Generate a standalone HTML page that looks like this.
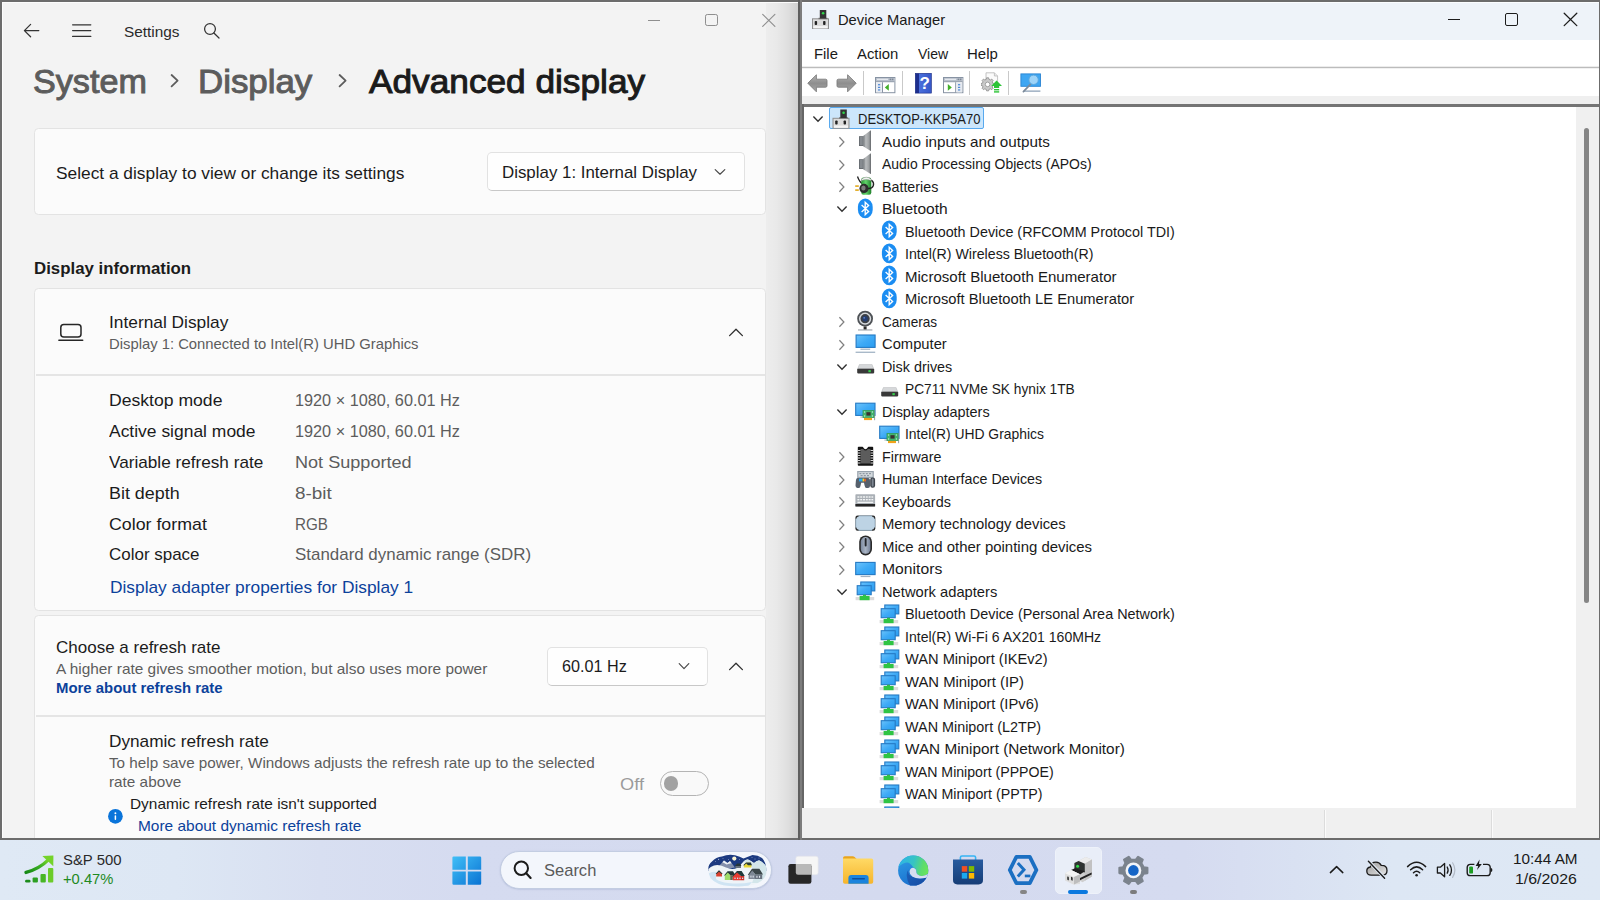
<!DOCTYPE html>
<html lang="en"><head><meta charset="utf-8"><title>Advanced display - Device Manager</title>
<style>

html,body{margin:0;padding:0}
body{width:1600px;height:900px;overflow:hidden;position:relative;background:#dbe4f2;font-family:'Liberation Sans',sans-serif}
div,span,svg{position:absolute;box-sizing:border-box}
.t{white-space:pre;transform-origin:0 0;display:block}
#taskbar{left:0;top:840px;width:1600px;height:60px;background:linear-gradient(90deg,#dfe9f5 0%,#dde7f4 11%,#d8dff1 20%,#d5dbf0 29%,#d4daef 55%,#d5dbf0 74%,#d9e1f2 81%,#dde7f4 87%,#dee8f4 100%)}
#set{left:0;top:0;width:800px;height:840px;background:#f3f3f3;overflow:hidden}
#dm{left:800px;top:0;width:800px;height:840px;background:#fff;overflow:hidden}
.card{background:#fbfbfb;border:1.4px solid #e3e3e3;border-radius:4.5px}
.hr{height:1.5px;background:#e5e5e5}
.combo{background:#fefefe;border:1.2px solid #e2e2e2;border-bottom:1.4px solid #c8c8c8;border-radius:5px}
.bd{background:#6c6c6c}

</style></head>
<body>
<div id="taskbar"></div>
<svg style="left:23px;top:852px" width="33" height="33" viewBox="0 0 33 33"><defs><linearGradient id="gSP" x1="0" y1="1" x2="1" y2="0"><stop offset="0" stop-color="#168a16"/><stop offset="0.55" stop-color="#3aae22"/><stop offset="1" stop-color="#7bd82a"/></linearGradient></defs><rect x="2.1" y="27.8" width="5.4" height="2.8" rx="1.3" fill="#1c8c1c"/><rect x="9.6" y="25.6" width="5.3" height="5" rx="1" fill="#2c9f22"/><rect x="17.5" y="21.9" width="5.3" height="8.7" rx="1" fill="#48b625"/><rect x="25" y="15.9" width="5.3" height="14.7" rx="1" fill="#6ccc2a"/><path d="M3 20.4 Q16 17 25.6 7.6" fill="none" stroke="url(#gSP)" stroke-width="3.4" stroke-linecap="round"/><path d="M19.4 4 L30.4 3.4 L30.3 14.2 Z" fill="#74d32a"/></svg>
<svg style="left:452px;top:856px" width="30" height="30" viewBox="0 0 30 30"><defs><linearGradient id="gW" x1="0" y1="0" x2="1" y2="1"><stop offset="0" stop-color="#41bff7"/><stop offset="1" stop-color="#0a73d3"/></linearGradient></defs><path d="M1.6 0.4 H13.8 V13.8 H0.4 V1.6 Q0.4 0.4 1.6 0.4 Z M15.8 0.4 H28 Q29.2 0.4 29.2 1.6 V13.8 H15.8 Z M0.4 15.5 H13.8 V28.8 H1.6 Q0.4 28.8 0.4 27.6 Z M15.8 15.5 H29.2 V27.6 Q29.2 28.8 28 28.8 H15.8 Z" fill="url(#gW)"/></svg>
<div style="left:500px;top:851px;width:272px;height:38px;border-radius:19px;background:#f3f6fc;border:1px solid #c3cde2;box-shadow:0 0.5px 1.5px rgba(80,100,150,0.25)"></div>
<svg style="left:511px;top:858px" width="24" height="24" viewBox="0 0 24 24"><circle cx="10.3" cy="10.2" r="6.7" fill="none" stroke="#1b1b1b" stroke-width="2"/><path d="M15.2 15.3 L19.6 19.9" stroke="#1b1b1b" stroke-width="2.2" stroke-linecap="round"/></svg>
<svg style="left:706px;top:853px" width="64" height="36" viewBox="0 0 64 36"><defs><clipPath id="cpV"><path d="M2.4 16 Q2 12 6 8.5 Q10 4 16 3.4 Q22 1 29 2.2 Q34 3.4 37.5 5.4 Q42 3.6 46.5 2 Q52 2.2 56 5 Q60 9 60.4 17 Q61 26 50 31 Q38 34.6 24 33 Q10 32 4.6 25 Q2.4 21 2.4 16 Z"/></clipPath></defs><g clip-path="url(#cpV)"><rect x="0" y="0" width="64" height="36" fill="#eaf2f7"/><rect x="0" y="0" width="64" height="18" fill="#1c3a80"/><path d="M13 13 L18 7.4 L21.4 10 L24 8 L29 14.6 L20 16 Z" fill="#8490ac"/><path d="M16.4 9.2 L18 7.4 L21.4 10 L24 8 L25.6 10.2 L23 10.8 L20.6 11.6 L18 10 Z" fill="#eef2f7"/><path d="M0 20 Q3 13.4 8 12.4 Q14 11 20 14.6 Q26 17 31 15 Q35 11.6 38 8 Q40 6 42 6.6 Q45 8 48 10 Q51 7 53.4 7.6 Q57 9 64 17 V36 H0 Z" fill="#eef4f8"/><path d="M37 9.4 Q40 6 42 6.6 Q45.6 8.2 48 10.2 Q51 7 53.4 7.6 Q58 9.4 62 16 V30 H46 Q50 22 46 14 Q42 9 37 9.4 Z" fill="#d3e6ea"/><path d="M0 22 Q6 17.6 10 19 V26 Q14 29 22 30 Q34 31.6 46 29 L40 36 H0 Z" fill="#cfe4f3"/><circle cx="28.3" cy="5.6" r="2.1" fill="#f8f4d2"/><path d="M10.2 20.4 L13 17.6 L16 20.4 V23.6 H10.2 Z" fill="#d9402f"/><path d="M9.6 20.8 L13 17.2 L16.6 20.8 L15.6 21 L13 18.8 L10.6 21 Z" fill="#233b3b"/><path d="M18.8 22 L21.6 18.8 L24.2 22 V27 H18.8 Z" fill="#9fdc6a"/><path d="M18 22.4 L21.6 18.2 L27 18.2 L29.6 22.4 L24.6 22.4 L21.8 19.6 L19 22.6 Z" fill="#22383a"/><rect x="24.2" y="22.2" width="2.6" height="4.8" fill="#5d6b50"/><path d="M26.8 23 L31 18.6 L35 23 V27.2 H26.8 Z" fill="#e83b30"/><path d="M35 23 H38.2 V27.2 H35 Z" fill="#c9302a"/><path d="M26 23.4 L31 18 L35.6 18 L38.8 23 L35 23 L31 19.6 L27 23.6 Z" fill="#1f3a3b"/><g fill="#cfe0ee"><rect x="28.4" y="24.6" width="1.2" height="1.4"/><rect x="31" y="24.6" width="1.2" height="1.4"/><rect x="33.4" y="24.6" width="1.2" height="1.4"/><rect x="36" y="24.6" width="1.2" height="1.4"/></g><path d="M42.6 21.4 L46 16.4 L49 21.4 V26 H42.6 Z" fill="#7c8794"/><path d="M49 21.4 H56.2 V26 H49 Z" fill="#6a7480"/><path d="M41.8 21.8 L46 15.8 L53.4 15.8 L57 21.6 L49.4 21.6 L46.2 17.4 L42.8 22 Z" fill="#3a4649"/><g fill="#dfe7ee"><rect x="44.4" y="22.6" width="1.1" height="2"/><rect x="46.6" y="22.6" width="1.1" height="2"/><rect x="50.4" y="22.8" width="1.1" height="2"/><rect x="53" y="22.8" width="1.1" height="2"/></g><path d="M37.8 12 L40 9.8 L44.6 9.8 L45.4 12 V14.6 H37.8 Z" fill="#e6d737"/><path d="M37.2 12.2 L40 9.4 L44.8 9.4 L46 12.2 L42 12.2 L40.2 10.6 L38.2 12.4 Z" fill="#26393b"/><path d="M29.4 12.8 L31.4 11 L34 11 L35 12.8 V15 H29.4 Z" fill="#66707c"/><path d="M28.8 13 L31.2 10.6 L34.2 10.6 L35.4 13 Z" fill="#26363a"/><g fill="#e6ecf6"><circle cx="12.6" cy="6.2" r="0.55"/><circle cx="17" cy="5.4" r="0.4"/><circle cx="22.6" cy="6.4" r="0.4"/><circle cx="33.6" cy="6.4" r="0.4"/><circle cx="46" cy="4.6" r="0.45"/><circle cx="49" cy="6" r="0.45"/><circle cx="53" cy="5" r="0.4"/><circle cx="9.6" cy="8.6" r="0.4"/></g></g></svg>
<svg style="left:787px;top:855px" width="33" height="30" viewBox="0 0 33 30"><rect x="8.8" y="1.2" width="22.4" height="18.6" rx="2.2" fill="#f6f6f6" stroke="#e2e4ea" stroke-width="0.6"/><rect x="1.4" y="9" width="23" height="19.8" rx="2.2" fill="#272727"/><path d="M8.8 9 H24.4 V19.8 H11 Q8.8 19.8 8.8 17.6 Z" fill="#b9b9b9"/></svg>
<svg style="left:842px;top:855px" width="32" height="30" viewBox="0 0 32 30"><defs><linearGradient id="gF" x1="0" y1="0" x2="0" y2="1"><stop offset="0" stop-color="#ffd965"/><stop offset="1" stop-color="#f6b52c"/></linearGradient></defs><path d="M1 3 Q1 1.2 2.8 1.2 H10.6 Q11.8 1.2 12.6 2 L14.6 4 H1 Z" fill="#e9a41c"/><path d="M1 3.6 H29.4 Q31.2 3.6 31.2 5.4 V27 Q31.2 28.8 29.4 28.8 H2.8 Q1 28.8 1 27 Z" fill="url(#gF)"/><path d="M6.4 28.8 V23 Q6.4 20 9.4 20 H23.6 Q26.6 20 26.6 23 V28.8 Z" fill="#1b84dd"/><rect x="10" y="23" width="13" height="1.4" rx="0.7" fill="#0d4f9e"/></svg>
<svg style="left:897px;top:853.5px" width="33" height="33" viewBox="0 0 33 33"><defs><linearGradient id="gE1" x1="0" y1="0.3" x2="1" y2="0.5"><stop offset="0" stop-color="#2db2ec"/><stop offset="0.5" stop-color="#36c3c4"/><stop offset="0.8" stop-color="#5cdc6c"/><stop offset="1" stop-color="#6be458"/></linearGradient><linearGradient id="gE2" x1="0.2" y1="0" x2="0.6" y2="1"><stop offset="0" stop-color="#2f9ee6"/><stop offset="1" stop-color="#186bcb"/></linearGradient><linearGradient id="gE3" x1="0" y1="0" x2="1" y2="1"><stop offset="0" stop-color="#1d62bd"/><stop offset="1" stop-color="#15479d"/></linearGradient><clipPath id="cpE"><circle cx="16.2" cy="16.5" r="15.1"/></clipPath></defs><g clip-path="url(#cpE)"><rect x="0" y="0" width="33" height="33" fill="url(#gE2)"/><path d="M0 14.2 L0 0 H33 V20 L31 19.4 Q27.5 22.8 23 21.7 Q19.6 20.7 19.3 18 Q19.5 14.4 16.4 13.6 Q13.4 9 10.7 8.5 Q5.6 8.4 0 14.2 Z" fill="url(#gE1)"/><path d="M11.4 15.4 Q10.4 21 15.1 22.6 Q20.4 25.8 29.2 23.7 L33 24 V33 H14 Q9.8 27 9.7 21.4 Q9.6 17.6 11.4 15.4 Z" fill="url(#gE3)"/><path d="M16 13.8 Q19.5 14.2 19.3 18 Q19.6 20.7 23 21.7 Q27.2 22.7 31.4 19.8 L33 20 V23 L29.2 23.8 Q20.4 25.9 15.2 22.5 Q12.4 20.6 12.6 17.3 Q13.2 14 16 13.8 Z" fill="#d6ddf0"/></g></svg>
<svg style="left:952px;top:854px" width="32" height="32" viewBox="0 0 32 32"><defs><linearGradient id="gS" x1="0" y1="0" x2="0" y2="1"><stop offset="0" stop-color="#275b9f"/><stop offset="1" stop-color="#163d76"/></linearGradient></defs><path d="M8.4 6.2 V3.6 Q8.4 2 10 2 H22 Q23.6 2 23.6 3.6 V6.2" fill="none" stroke="#36b4f4" stroke-width="1.6"/><path d="M1 5.4 H31 V26 Q31 30.4 26.6 30.4 H5.4 Q1 30.4 1 26 Z" fill="url(#gS)"/><rect x="9.8" y="12.1" width="5.4" height="5.6" fill="#f25022"/><rect x="16.8" y="12.1" width="5.4" height="5.6" fill="#7fba00"/><rect x="9.8" y="19" width="5.4" height="5.6" fill="#1ba9f0"/><rect x="16.8" y="19" width="5.4" height="5.6" fill="#ffb900"/></svg>
<svg style="left:1006px;top:853px" width="34" height="34" viewBox="0 0 34 34"><path d="M10.4 3.8 H23.8 L30.4 17 L23.8 30.2 H10.4 L3.8 17 Z" fill="none" stroke="#1b6fc2" stroke-width="3.8" stroke-linejoin="round"/><path d="M11.8 10 L18 16.8 L11.8 23.6" fill="none" stroke="#1b6fc2" stroke-width="3"/><rect x="18.8" y="21.6" width="5.6" height="2.7" fill="#1b6fc2"/></svg>
<div style="left:1020.4px;top:890.2px;width:7px;height:3.4px;border-radius:2px;background:#858585"></div>
<div style="left:1055px;top:846.6px;width:47px;height:47.6px;border-radius:5px;background:#e9eef8;border:1px solid #eef2fa"></div>
<svg style="left:1063px;top:855px" width="32" height="31" viewBox="0 0 32 31"><path d="M15.5 6 L22.6 2 L29 4.6 L29 21.4 L19.6 27.2 L15.5 25 Z" fill="#cfcfcf"/><path d="M15.5 6 L22.6 2 L29 4.6 L21.8 8.8 Z" fill="#ececec"/><path d="M21.8 8.8 L29 4.6 V21.4 L21.8 25.8 Z" fill="#c2c2c2"/><path d="M11.4 8 L15.5 6 L21.8 8.8 V17.4 L11.4 14.8 Z" fill="#2f3331"/><circle cx="14.6" cy="11.2" r="1.5" fill="#2fe04a"/><path d="M8 15 L12 13.2 L21.8 16.2 L17 19.4 Z" fill="#1f1f1f"/><path d="M2 18.2 L8 15 L17 19.2 V29 L10.4 29.6 L2 25.6 Z" fill="#dedede"/><path d="M2 18.2 L8 15 L17 19.2 L11 22 Z" fill="#f4f4f4"/><path d="M11 22 L17 19.2 V26.6 L11 29.6 Z" fill="#bdbdbd"/><path d="M17 23 L28.6 17.6 V19.4 L17 25.2 Z" fill="#222"/><rect x="4.2" y="21.4" width="1.7" height="3.6" rx="0.8" fill="#333" transform="skewY(25) translate(0,-2.2)"/><rect x="8" y="21.6" width="1.7" height="3.6" rx="0.8" fill="#333" transform="skewY(25) translate(0,-3.8)"/></svg>
<div style="left:1068.4px;top:890.2px;width:19.8px;height:4px;border-radius:2px;background:#0b79df"></div>
<svg style="left:1117px;top:853.6px" width="33" height="33" viewBox="0 0 33 33"><path d="M26.62 13.24 L30.34 13.72 L30.34 19.08 L26.62 19.56 L24.25 23.67 L25.69 27.14 L21.05 29.82 L18.77 26.83 L14.03 26.83 L11.75 29.82 L7.11 27.14 L8.55 23.67 L6.18 19.56 L2.46 19.08 L2.46 13.72 L6.18 13.24 L8.55 9.13 L7.11 5.66 L11.75 2.98 L14.03 5.97 L18.77 5.97 L21.05 2.98 L25.69 5.66 L24.25 9.13 Z" fill="#7b838d" stroke="#7b838d" stroke-width="2.2" stroke-linejoin="round"/><circle cx="16.4" cy="16.4" r="7.9" fill="#f2f4f8"/><circle cx="16.4" cy="16.4" r="5.3" fill="#1565c6"/></svg>
<div style="left:1130.4px;top:890.4px;width:6.6px;height:3.2px;border-radius:2px;background:#7c7c7c"></div>
<svg style="left:1328px;top:863px" width="18" height="13" viewBox="0 0 18 13"><path d="M2.4 9.6 L8.6 3.6 L14.8 9.6" fill="none" stroke="#1b1b1b" stroke-width="1.5" stroke-linecap="round" stroke-linejoin="round"/></svg>
<svg style="left:1364px;top:858px" width="26" height="22" viewBox="0 0 26 22"><defs><linearGradient id="gC" x1="0" y1="0" x2="1" y2="1"><stop offset="0" stop-color="#9b9b9b"/><stop offset="1" stop-color="#e6e6e6"/></linearGradient></defs><path d="M7.2 17.2 Q2.8 17.2 2.8 13 Q2.8 9.6 6.4 9 Q7 4.2 12 4.2 Q15.6 4.2 17.2 7.4 Q23 7.2 23 12.6 Q23 17.2 18.4 17.2 Z" fill="url(#gC)" stroke="#1b1b1b" stroke-width="1.3" stroke-linejoin="round"/><path d="M4.6 3.2 L20.6 20" stroke="#dfe8f3" stroke-width="3.4"/><path d="M4.4 3.2 L20.6 20.2" stroke="#1b1b1b" stroke-width="1.4" stroke-linecap="round"/></svg>
<svg style="left:1405px;top:859px" width="24" height="20" viewBox="0 0 24 20"><path d="M2.6 7.6 Q11.6 -1.2 20.6 7.6" fill="none" stroke="#1b1b1b" stroke-width="1.5" stroke-linecap="round"/><path d="M5.6 10.8 Q11.6 5 17.6 10.8" fill="none" stroke="#1b1b1b" stroke-width="1.5" stroke-linecap="round"/><path d="M8.5 13.8 Q11.6 10.8 14.7 13.8" fill="none" stroke="#1b1b1b" stroke-width="1.5" stroke-linecap="round"/><circle cx="11.6" cy="16.2" r="1.3" fill="#1b1b1b"/></svg>
<svg style="left:1435px;top:860px" width="24" height="20" viewBox="0 0 24 20"><path d="M2.4 7.2 H5.4 L9.6 3.4 V16.8 L5.4 13 H2.4 Z" fill="none" stroke="#1b1b1b" stroke-width="1.3" stroke-linejoin="round"/><path d="M12.2 7 Q14 10.1 12.2 13.2" fill="none" stroke="#1b1b1b" stroke-width="1.3" stroke-linecap="round"/><path d="M14.8 4.8 Q18.2 10.1 14.8 15.4" fill="none" stroke="#1b1b1b" stroke-width="1.3" stroke-linecap="round"/><path d="M17.6 2.8 Q22.2 10.1 17.6 17.4" fill="none" stroke="#b4bcc8" stroke-width="1.2" stroke-linecap="round"/></svg>
<svg style="left:1465px;top:858px" width="29" height="20" viewBox="0 0 29 20"><rect x="2.2" y="6.4" width="23" height="11.2" rx="3.2" fill="none" stroke="#1b1b1b" stroke-width="1.4"/><path d="M25.8 10 Q27.4 10 27.4 12 Q27.4 14 25.8 14 Z" fill="#1b1b1b"/><rect x="4.2" y="8.4" width="3.8" height="7.2" rx="1.2" fill="#1d9d22"/><rect x="9.4" y="4" width="8.6" height="4" fill="#dbe6f2"/><path d="M14.6 1.6 L10.6 8 H13.2 L12 12 L16.8 6 H14 Z" fill="#1b1b1b"/></svg>
<div id="set"><div style="left:766px;top:3px;width:32px;height:835px;background:linear-gradient(90deg,rgba(0,0,0,0.025) 0%,rgba(0,0,0,0.045) 35%,rgba(0,0,0,0.085) 70%,rgba(0,0,0,0.145) 100%)"></div>
<div class="card" style="left:34.3px;top:128.3px;width:731.4px;height:86.7px"></div>
<div class="combo" style="left:487.3px;top:152.3px;width:257.3px;height:38.8px"></div>
<div class="card" style="left:34.3px;top:288.3px;width:731.4px;height:323.2px"></div>
<div class="hr" style="left:35.5px;top:374.2px;width:729px"></div>
<div class="card" style="left:34.3px;top:615.3px;width:731.4px;height:260px"></div>
<div class="hr" style="left:35.5px;top:715px;width:729px"></div>
<div class="combo" style="left:547.2px;top:646.5px;width:161.3px;height:39px"></div>
<div style="left:659.5px;top:771.3px;width:49.3px;height:24.4px;border:1.2px solid #b4b4b4;border-radius:13px;background:#f9f9f9"></div>
<div style="left:663.8px;top:776.3px;width:14.4px;height:14.4px;border-radius:8px;background:#a2a2a2"></div>
<svg style="left:22px;top:22px" width="20" height="18" viewBox="0 0 20 18"><path d="M16.8 8.6 H2.6 M8.6 2.4 L2.4 8.6 L8.6 14.8" fill="none" stroke="#333" stroke-width="1.25" stroke-linecap="round" stroke-linejoin="round"/></svg>
<svg style="left:70px;top:22px" width="24" height="18" viewBox="0 0 24 18"><path d="M2.6 2.8 H20.8 M2.6 8.6 H20.8 M2.6 14.4 H20.8" stroke="#333" stroke-width="1.25" stroke-linecap="round"/></svg>
<svg style="left:202px;top:20px" width="22" height="22" viewBox="0 0 22 22"><circle cx="8" cy="9" r="5.4" fill="none" stroke="#333" stroke-width="1.25"/><path d="M11.9 13 L17 18" stroke="#333" stroke-width="1.25" stroke-linecap="round"/></svg>
<svg style="left:170.2px;top:72px" width="12" height="18" viewBox="0 0 12 18"><path d="M1.6 3 L7.6 8.7 L1.6 14.4" fill="none" stroke="#5c5c5c" stroke-width="1.8" stroke-linecap="round" stroke-linejoin="round"/></svg>
<svg style="left:337.8px;top:72px" width="12" height="18" viewBox="0 0 12 18"><path d="M1.6 3 L7.6 8.7 L1.6 14.4" fill="none" stroke="#5c5c5c" stroke-width="1.8" stroke-linecap="round" stroke-linejoin="round"/></svg>
<div style="left:647.5px;top:19.7px;width:12.5px;height:1.1px;background:#8e8e8e"></div>
<div style="left:705px;top:14.2px;width:12.5px;height:12.3px;border:1.1px solid #8e8e8e;border-radius:2.3px"></div>
<svg style="left:761px;top:13px" width="16" height="16" viewBox="0 0 16 16"><path d="M1.7 1.4 L13.9 13.4 M13.9 1.4 L1.7 13.4" stroke="#8e8e8e" stroke-width="1.1" stroke-linecap="round"/></svg>
<svg style="left:713px;top:167px" width="14" height="10" viewBox="0 0 14 10"><path d="M2.2 2.6 L7 7.2 L11.8 2.6" fill="none" stroke="#4a4a4a" stroke-width="1.2" stroke-linecap="round" stroke-linejoin="round"/></svg>
<svg style="left:677px;top:661px" width="14" height="10" viewBox="0 0 14 10"><path d="M2.2 2.6 L7 7.6 L11.8 2.6" fill="none" stroke="#4a4a4a" stroke-width="1.2" stroke-linecap="round" stroke-linejoin="round"/></svg>
<svg style="left:727.5px;top:325.5px" width="16" height="12" viewBox="0 0 16 12"><path d="M1.6 9.6 L8 3.2 L14.4 9.6" fill="none" stroke="#2e2e2e" stroke-width="1.3" stroke-linecap="round" stroke-linejoin="round"/></svg>
<svg style="left:727.5px;top:659.5px" width="16" height="12" viewBox="0 0 16 12"><path d="M1.6 9.6 L8 3.2 L14.4 9.6" fill="none" stroke="#2e2e2e" stroke-width="1.3" stroke-linecap="round" stroke-linejoin="round"/></svg>
<svg style="left:57px;top:322px" width="28" height="21" viewBox="0 0 28 21"><rect x="3.8" y="2.5" width="20.2" height="12.6" rx="3" fill="none" stroke="#262626" stroke-width="1.5"/><path d="M1.9 18.3 H25.7" stroke="#262626" stroke-width="1.5" stroke-linecap="round"/></svg>
<svg style="left:107px;top:808px" width="17" height="17" viewBox="0 0 17 17"><circle cx="8.4" cy="8.3" r="7.35" fill="#0a74da"/><circle cx="8.4" cy="5.2" r="0.95" fill="#fff"/><rect x="7.65" y="7.3" width="1.5" height="4.6" rx="0.7" fill="#fff"/></svg>
<div style="left:2px;top:2px;width:796px;height:1px;background:#fcfcfc"></div>
<div style="left:2px;top:2px;width:1px;height:836px;background:#fcfcfc"></div>
<div class="bd" style="left:0;top:0;width:800px;height:1.6px"></div>
<div class="bd" style="left:0;top:0;width:1.7px;height:840px"></div>
<div class="bd" style="left:0;top:838.3px;width:800px;height:1.7px"></div></div>
<div id="dm"><div style="left:0;top:0;width:800px;height:39.5px;background:#eef3f9"></div>
<div style="left:0;top:2px;width:800px;height:1px;background:#fbfdff"></div>
<div style="left:0;top:67px;width:800px;height:1px;background:#bcbcbc"></div>
<div style="left:0;top:66px;width:800px;height:1px;background:#ececec"></div>
<div style="left:0;top:68px;width:800px;height:1px;background:#f1f1f1"></div>
<div style="left:0;top:96.2px;width:800px;height:8.3px;background:#efefef"></div>
<div style="left:0;top:104.3px;width:800px;height:2.3px;background:#747474"></div>
<div style="left:0;top:104.3px;width:3.9px;height:704px;background:#666"></div>
<div style="left:776px;top:106.6px;width:23px;height:701px;background:#f0f0f0"></div>
<div style="left:783.7px;top:128px;width:5.4px;height:475px;border-radius:3px;background:#858585"></div>
<div style="left:0;top:807.6px;width:800px;height:31px;background:#f0f0f0"></div>
<div style="left:523.5px;top:810px;width:1px;height:28px;background:#e0e0e0"></div><div style="left:524.5px;top:810px;width:1px;height:28px;background:#fafafa"></div>
<div style="left:690.5px;top:810px;width:1px;height:28px;background:#e0e0e0"></div><div style="left:691.5px;top:810px;width:1px;height:28px;background:#fafafa"></div>
<div style="left:29.2px;top:106.8px;width:154.6px;height:22.2px;background:#cce6fb;border:1px solid #58a9ee;border-radius:2px"></div>
<svg style="left:11.799999999999955px;top:115.2px" width="12" height="8" viewBox="0 0 12 8"><path d="M1.4 1.6 L6 6.2 L10.6 1.6" fill="none" stroke="#303030" stroke-width="1.4"/></svg>
<svg style="left:32.0px;top:107.5px" width="21" height="21" viewBox="0 0 21 21"><rect x="1" y="10.3" width="16" height="10" fill="#dcdcdc" stroke="#8f8f8f" stroke-width="1"/><rect x="2" y="17.6" width="14" height="2.2" fill="#f4f4f4"/><rect x="7" y="9.3" width="9" height="1.4" fill="#777"/><rect x="8.3" y="1.5" width="6.5" height="8.5" fill="#333"/><circle cx="11.6" cy="4.8" r="1.3" fill="#2fd84a"/><rect x="3.2" y="12.4" width="2.4" height="4.2" rx="0.8" fill="#222"/><rect x="11.6" y="12.4" width="2.4" height="4.2" rx="0.8" fill="#222"/></svg>
<svg style="left:38px;top:136.0px" width="8" height="12" viewBox="0 0 8 12"><path d="M1.4 1.3 L5.9 6 L1.4 10.7" fill="none" stroke="#808080" stroke-width="1.25"/></svg>
<svg style="left:55px;top:130.0px" width="21" height="21" viewBox="0 0 21 21"><rect x="4" y="6.2" width="4.4" height="9.8" fill="#63686d"/><rect x="4.8" y="7" width="3" height="8.2" fill="#868b90"/><path d="M8.2 6 L15.4 0.6 L15.6 21 L8.2 16.2 Z" fill="url(#gSpk)"/><path d="M15 0.8 L15.8 0.6 L15.8 21 L15 20.6 Z" fill="#5d6165"/></svg>
<svg style="left:38px;top:158.5px" width="8" height="12" viewBox="0 0 8 12"><path d="M1.4 1.3 L5.9 6 L1.4 10.7" fill="none" stroke="#808080" stroke-width="1.25"/></svg>
<svg style="left:55px;top:152.5px" width="21" height="21" viewBox="0 0 21 21"><rect x="4" y="6.2" width="4.4" height="9.8" fill="#63686d"/><rect x="4.8" y="7" width="3" height="8.2" fill="#868b90"/><path d="M8.2 6 L15.4 0.6 L15.6 21 L8.2 16.2 Z" fill="url(#gSpk)"/><path d="M15 0.8 L15.8 0.6 L15.8 21 L15 20.6 Z" fill="#5d6165"/></svg>
<svg style="left:38px;top:181.0px" width="8" height="12" viewBox="0 0 8 12"><path d="M1.4 1.3 L5.9 6 L1.4 10.7" fill="none" stroke="#808080" stroke-width="1.25"/></svg>
<svg style="left:55px;top:175.0px" width="21" height="21" viewBox="0 0 21 21"><path d="M2.5 1.5 C4 6,6 8,8 9" fill="none" stroke="#222" stroke-width="1.3"/><rect x="6.3" y="2.5" width="10" height="17.3" rx="2.2" fill="url(#gGrn)"/><path d="M6.5 4.2 Q11.3 0.2 16.1 4.2 L16.1 5.6 Q11.3 3.4 6.5 5.6 Z" fill="#f1f1f1" stroke="#8a8a8a" stroke-width="0.5"/><path d="M13 13.5 C19 14,20 8,16.5 5.2" fill="none" stroke="#222" stroke-width="1.4"/><circle cx="9" cy="13.4" r="4.6" fill="#2d2d2d"/><ellipse cx="8.4" cy="13" rx="2.2" ry="2.6" fill="#7b7b7b"/><rect x="0.2" y="10.3" width="3.6" height="1.6" fill="#e2a91c"/><rect x="0.2" y="14.3" width="3.6" height="1.6" fill="#e2a91c"/></svg>
<svg style="left:35.5px;top:205.2px" width="12" height="8" viewBox="0 0 12 8"><path d="M1.4 1.6 L6 6.2 L10.6 1.6" fill="none" stroke="#303030" stroke-width="1.4"/></svg>
<svg style="left:55px;top:197.5px" width="21" height="21" viewBox="0 0 21 21"><rect x="2.9" y="0.5" width="14.8" height="19.8" rx="7.4" ry="8.6" fill="#1b8df2"/><path d="M6.6 6.9 L13.6 13.4 L10.2 16.6 L10.2 4.2 L13.6 7.4 L6.6 13.9" fill="none" stroke="#fff" stroke-width="1.35" stroke-linejoin="miter"/></svg>
<svg style="left:79px;top:220.0px" width="21" height="21" viewBox="0 0 21 21"><rect x="2.9" y="0.5" width="14.8" height="19.8" rx="7.4" ry="8.6" fill="#1b8df2"/><path d="M6.6 6.9 L13.6 13.4 L10.2 16.6 L10.2 4.2 L13.6 7.4 L6.6 13.9" fill="none" stroke="#fff" stroke-width="1.35" stroke-linejoin="miter"/></svg>
<svg style="left:79px;top:242.5px" width="21" height="21" viewBox="0 0 21 21"><rect x="2.9" y="0.5" width="14.8" height="19.8" rx="7.4" ry="8.6" fill="#1b8df2"/><path d="M6.6 6.9 L13.6 13.4 L10.2 16.6 L10.2 4.2 L13.6 7.4 L6.6 13.9" fill="none" stroke="#fff" stroke-width="1.35" stroke-linejoin="miter"/></svg>
<svg style="left:79px;top:265.0px" width="21" height="21" viewBox="0 0 21 21"><rect x="2.9" y="0.5" width="14.8" height="19.8" rx="7.4" ry="8.6" fill="#1b8df2"/><path d="M6.6 6.9 L13.6 13.4 L10.2 16.6 L10.2 4.2 L13.6 7.4 L6.6 13.9" fill="none" stroke="#fff" stroke-width="1.35" stroke-linejoin="miter"/></svg>
<svg style="left:79px;top:287.5px" width="21" height="21" viewBox="0 0 21 21"><rect x="2.9" y="0.5" width="14.8" height="19.8" rx="7.4" ry="8.6" fill="#1b8df2"/><path d="M6.6 6.9 L13.6 13.4 L10.2 16.6 L10.2 4.2 L13.6 7.4 L6.6 13.9" fill="none" stroke="#fff" stroke-width="1.35" stroke-linejoin="miter"/></svg>
<svg style="left:38px;top:316.0px" width="8" height="12" viewBox="0 0 8 12"><path d="M1.4 1.3 L5.9 6 L1.4 10.7" fill="none" stroke="#808080" stroke-width="1.25"/></svg>
<svg style="left:55px;top:310.0px" width="21" height="21" viewBox="0 0 21 21"><rect x="3" y="19.4" width="14.4" height="1.1" fill="#9aa0a6"/><rect x="8.6" y="16.4" width="3" height="3" fill="#2b2b2b"/><circle cx="10.1" cy="8.7" r="7.9" fill="#4e5256"/><circle cx="10.1" cy="8.7" r="6.1" fill="#d9dcdf"/><circle cx="10.1" cy="8.7" r="4.6" fill="#3c4046"/><circle cx="10.1" cy="8.7" r="2.7" fill="#263f73"/><circle cx="9.2" cy="7.8" r="0.9" fill="#5b83c9"/></svg>
<svg style="left:38px;top:338.5px" width="8" height="12" viewBox="0 0 8 12"><path d="M1.4 1.3 L5.9 6 L1.4 10.7" fill="none" stroke="#808080" stroke-width="1.25"/></svg>
<svg style="left:55px;top:332.5px" width="21" height="21" viewBox="0 0 21 21"><rect x="1.1" y="2" width="19" height="12.4" fill="url(#gScr)" stroke="#2479c4" stroke-width="1.1"/><rect x="5.4" y="15.6" width="9.8" height="1.2" fill="#9fb0c0"/><rect x="0.6" y="18.6" width="19.6" height="1.4" fill="#a9b9c9"/></svg>
<svg style="left:35.5px;top:362.7px" width="12" height="8" viewBox="0 0 12 8"><path d="M1.4 1.6 L6 6.2 L10.6 1.6" fill="none" stroke="#303030" stroke-width="1.4"/></svg>
<svg style="left:55px;top:355.0px" width="21" height="21" viewBox="0 0 21 21"><path d="M4.2 9.2 L17.2 9.2 L19.2 14 L2.2 14 Z" fill="#c3c5c7"/><path d="M4.6 9.9 L16.8 9.9 L18 13 L3.4 13 Z" fill="#d6d8da"/><rect x="2.2" y="13.8" width="17" height="4.6" rx="0.8" fill="#383838"/><rect x="13.4" y="15.1" width="2.4" height="2.1" fill="#35d24a"/></svg>
<svg style="left:79px;top:377.5px" width="21" height="21" viewBox="0 0 21 21"><path d="M4.2 9.2 L17.2 9.2 L19.2 14 L2.2 14 Z" fill="#c3c5c7"/><path d="M4.6 9.9 L16.8 9.9 L18 13 L3.4 13 Z" fill="#d6d8da"/><rect x="2.2" y="13.8" width="17" height="4.6" rx="0.8" fill="#383838"/><rect x="13.4" y="15.1" width="2.4" height="2.1" fill="#35d24a"/></svg>
<svg style="left:35.5px;top:407.7px" width="12" height="8" viewBox="0 0 12 8"><path d="M1.4 1.6 L6 6.2 L10.6 1.6" fill="none" stroke="#303030" stroke-width="1.4"/></svg>
<svg style="left:55px;top:400.0px" width="21" height="21" viewBox="0 0 21 21"><rect x="0.7" y="3.2" width="19.3" height="12.2" fill="url(#gScr)" stroke="#2479c4" stroke-width="1.1"/><rect x="19.2" y="10" width="0.9" height="10.2" fill="#8d949b"/><rect x="5.4" y="16.6" width="3" height="0.9" fill="#9aa3ab"/><rect x="7.6" y="10.1" width="11.8" height="7.8" fill="#2f9a57"/><rect x="8.2" y="10.7" width="10.6" height="6.6" fill="#43b36c"/><rect x="11.4" y="12.2" width="4.2" height="3.4" fill="#3a2f2f"/><circle cx="9.6" cy="12" r="0.7" fill="#bfe8cf"/><circle cx="17.4" cy="12" r="0.7" fill="#bfe8cf"/><circle cx="9.6" cy="16" r="0.7" fill="#bfe8cf"/><circle cx="17.4" cy="16" r="0.7" fill="#bfe8cf"/><rect x="9" y="17.9" width="8" height="2.2" fill="#f0a31a"/></svg>
<svg style="left:79px;top:422.5px" width="21" height="21" viewBox="0 0 21 21"><rect x="0.7" y="3.2" width="19.3" height="12.2" fill="url(#gScr)" stroke="#2479c4" stroke-width="1.1"/><rect x="19.2" y="10" width="0.9" height="10.2" fill="#8d949b"/><rect x="5.4" y="16.6" width="3" height="0.9" fill="#9aa3ab"/><rect x="7.6" y="10.1" width="11.8" height="7.8" fill="#2f9a57"/><rect x="8.2" y="10.7" width="10.6" height="6.6" fill="#43b36c"/><rect x="11.4" y="12.2" width="4.2" height="3.4" fill="#3a2f2f"/><circle cx="9.6" cy="12" r="0.7" fill="#bfe8cf"/><circle cx="17.4" cy="12" r="0.7" fill="#bfe8cf"/><circle cx="9.6" cy="16" r="0.7" fill="#bfe8cf"/><circle cx="17.4" cy="16" r="0.7" fill="#bfe8cf"/><rect x="9" y="17.9" width="8" height="2.2" fill="#f0a31a"/></svg>
<svg style="left:38px;top:451.0px" width="8" height="12" viewBox="0 0 8 12"><path d="M1.4 1.3 L5.9 6 L1.4 10.7" fill="none" stroke="#808080" stroke-width="1.25"/></svg>
<svg style="left:55px;top:445.0px" width="21" height="21" viewBox="0 0 21 21"><path d="M3.6 1.8 H7.4 Q8 1.8 8.3 2.4 Q9.2 4.2 10.5 4.2 Q11.8 4.2 12.7 2.4 Q13 1.8 13.6 1.8 H17.4 Q18.2 1.8 18.2 2.6 V19.9 Q18.2 20.7 17.4 20.7 H3.6 Q2.8 20.7 2.8 19.9 V2.6 Q2.8 1.8 3.6 1.8 Z" fill="#141414"/><path d="M5.6 4 H8.2 Q9.2 5.6 10.5 5.6 Q11.8 5.6 12.8 4 H15.4 V18.6 H5.6 Z" fill="#5c5c5c"/><g fill="#d9d9d9"><rect x="2.8" y="5" width="2.6" height="1"/><rect x="2.8" y="7.5" width="2.6" height="1"/><rect x="2.8" y="10" width="2.6" height="1"/><rect x="2.8" y="12.5" width="2.6" height="1"/><rect x="2.8" y="15" width="2.6" height="1"/><rect x="2.8" y="17.5" width="2.6" height="1"/><rect x="15.6" y="5" width="2.6" height="1"/><rect x="15.6" y="7.5" width="2.6" height="1"/><rect x="15.6" y="10" width="2.6" height="1"/><rect x="15.6" y="12.5" width="2.6" height="1"/><rect x="15.6" y="15" width="2.6" height="1"/><rect x="15.6" y="17.5" width="2.6" height="1"/></g></svg>
<svg style="left:38px;top:473.5px" width="8" height="12" viewBox="0 0 8 12"><path d="M1.4 1.3 L5.9 6 L1.4 10.7" fill="none" stroke="#808080" stroke-width="1.25"/></svg>
<svg style="left:55px;top:467.5px" width="21" height="21" viewBox="0 0 21 21"><rect x="2.2" y="3" width="16.6" height="7" fill="#98a2ac"/><rect x="3.4" y="4.2" width="14.2" height="4.6" fill="#d4dade"/><g fill="#8f99a3"><rect x="4.4" y="5" width="2" height="1.2"/><rect x="7.6" y="5" width="2" height="1.2"/><rect x="10.8" y="5" width="2" height="1.2"/><rect x="14" y="5" width="2" height="1.2"/><rect x="5.6" y="7" width="2" height="1.2"/><rect x="8.8" y="7" width="2" height="1.2"/><rect x="12" y="7" width="2" height="1.2"/></g><path d="M2.4 10 L13.2 10 Q15 10 15 13 L15 18 Q15 20 13 20 L11.4 20 Q10 20 9.6 17.4 L9 14.8 L6.2 14.8 L5.6 17.4 Q5.2 20 3.8 20 L2.4 20 Q0.5 20 0.5 17.6 L0.9 12.6 Q1 10 2.4 10 Z" fill="#56606c"/><rect x="4" y="10.6" width="3.6" height="2.8" fill="#28a8f0"/><rect x="7.6" y="10.6" width="1.6" height="2.8" fill="#f4d225"/><rect x="9.2" y="10.8" width="1.8" height="2.6" fill="#e8642c"/><rect x="15.2" y="9.6" width="4.9" height="10.2" rx="2.2" fill="#3d434b"/><rect x="16.7" y="10.6" width="1.9" height="8" rx="0.9" fill="#7e8792"/></svg>
<svg style="left:38px;top:496.0px" width="8" height="12" viewBox="0 0 8 12"><path d="M1.4 1.3 L5.9 6 L1.4 10.7" fill="none" stroke="#808080" stroke-width="1.25"/></svg>
<svg style="left:55px;top:490.0px" width="21" height="21" viewBox="0 0 21 21"><rect x="0.4" y="4.3" width="19.7" height="12.2" rx="0.8" fill="#aab0b6"/><rect x="0.4" y="14" width="19.7" height="2.5" fill="#262626"/><g fill="#f3f5f6"><rect x="2.4" y="6.3" width="15.8" height="1.4"/><rect x="2.4" y="9" width="15.8" height="1.4"/><rect x="2.4" y="11.7" width="15.8" height="1.3"/></g><g fill="#aab0b6"><rect x="4.4" y="6" width="0.8" height="5"/><rect x="7.2" y="6" width="0.8" height="5"/><rect x="10" y="6" width="0.8" height="5"/><rect x="12.8" y="6" width="0.8" height="5"/><rect x="15.6" y="6" width="0.8" height="5"/></g></svg>
<svg style="left:38px;top:518.5px" width="8" height="12" viewBox="0 0 8 12"><path d="M1.4 1.3 L5.9 6 L1.4 10.7" fill="none" stroke="#808080" stroke-width="1.25"/></svg>
<svg style="left:55px;top:512.5px" width="21" height="21" viewBox="0 0 21 21"><rect x="0.4" y="2.5" width="19.9" height="15.2" rx="2.2" fill="#2b2b2b"/><rect x="0.4" y="5.8" width="19.9" height="8.6" fill="#9fb8cc"/><rect x="3.6" y="2.5" width="13.4" height="15.2" fill="#9fb8cc"/><rect x="1.3" y="3.5" width="18.1" height="13.2" rx="3.2" fill="#bdd3e4"/></svg>
<svg style="left:38px;top:541.0px" width="8" height="12" viewBox="0 0 8 12"><path d="M1.4 1.3 L5.9 6 L1.4 10.7" fill="none" stroke="#808080" stroke-width="1.25"/></svg>
<svg style="left:55px;top:535.0px" width="21" height="21" viewBox="0 0 21 21"><rect x="4.2" y="0.4" width="12.8" height="20" rx="6.4" fill="#2a2a2a"/><rect x="5.8" y="2" width="9.6" height="16.8" rx="4.8" fill="url(#gMse)"/><rect x="9.7" y="3" width="1.9" height="8.4" rx="0.9" fill="#23262b"/></svg>
<svg style="left:38px;top:563.5px" width="8" height="12" viewBox="0 0 8 12"><path d="M1.4 1.3 L5.9 6 L1.4 10.7" fill="none" stroke="#808080" stroke-width="1.25"/></svg>
<svg style="left:55px;top:557.5px" width="21" height="21" viewBox="0 0 21 21"><rect x="0.7" y="4.4" width="19.4" height="12.2" fill="url(#gScr)" stroke="#2479c4" stroke-width="1.1"/><rect x="5.6" y="17.8" width="9.8" height="1.3" fill="#a3b2c1"/></svg>
<svg style="left:35.5px;top:587.7px" width="12" height="8" viewBox="0 0 12 8"><path d="M1.4 1.6 L6 6.2 L10.6 1.6" fill="none" stroke="#303030" stroke-width="1.4"/></svg>
<svg style="left:55px;top:580.0px" width="21" height="21" viewBox="0 0 21 21"><rect x="5.8" y="2" width="14" height="8.9" fill="url(#gScr)" stroke="#2479c4" stroke-width="1.1"/><rect x="2.2" y="5.7" width="14" height="9" fill="url(#gScr)" stroke="#2479c4" stroke-width="1.1"/><rect x="0.6" y="17" width="18.6" height="3.2" fill="#dcdcdc"/><rect x="8" y="14.8" width="3" height="1.4" fill="#35c247"/><rect x="4.6" y="16" width="10" height="4.2" fill="#2fc444"/></svg>
<svg style="left:79px;top:602.5px" width="21" height="21" viewBox="0 0 21 21"><rect x="5.8" y="2" width="14" height="8.9" fill="url(#gScr)" stroke="#2479c4" stroke-width="1.1"/><rect x="2.2" y="5.7" width="14" height="9" fill="url(#gScr)" stroke="#2479c4" stroke-width="1.1"/><rect x="0.6" y="17" width="18.6" height="3.2" fill="#dcdcdc"/><rect x="8" y="14.8" width="3" height="1.4" fill="#35c247"/><rect x="4.6" y="16" width="10" height="4.2" fill="#2fc444"/></svg>
<svg style="left:79px;top:625.0px" width="21" height="21" viewBox="0 0 21 21"><rect x="5.8" y="2" width="14" height="8.9" fill="url(#gScr)" stroke="#2479c4" stroke-width="1.1"/><rect x="2.2" y="5.7" width="14" height="9" fill="url(#gScr)" stroke="#2479c4" stroke-width="1.1"/><rect x="0.6" y="17" width="18.6" height="3.2" fill="#dcdcdc"/><rect x="8" y="14.8" width="3" height="1.4" fill="#35c247"/><rect x="4.6" y="16" width="10" height="4.2" fill="#2fc444"/></svg>
<svg style="left:79px;top:647.5px" width="21" height="21" viewBox="0 0 21 21"><rect x="5.8" y="2" width="14" height="8.9" fill="url(#gScr)" stroke="#2479c4" stroke-width="1.1"/><rect x="2.2" y="5.7" width="14" height="9" fill="url(#gScr)" stroke="#2479c4" stroke-width="1.1"/><rect x="0.6" y="17" width="18.6" height="3.2" fill="#dcdcdc"/><rect x="8" y="14.8" width="3" height="1.4" fill="#35c247"/><rect x="4.6" y="16" width="10" height="4.2" fill="#2fc444"/></svg>
<svg style="left:79px;top:670.0px" width="21" height="21" viewBox="0 0 21 21"><rect x="5.8" y="2" width="14" height="8.9" fill="url(#gScr)" stroke="#2479c4" stroke-width="1.1"/><rect x="2.2" y="5.7" width="14" height="9" fill="url(#gScr)" stroke="#2479c4" stroke-width="1.1"/><rect x="0.6" y="17" width="18.6" height="3.2" fill="#dcdcdc"/><rect x="8" y="14.8" width="3" height="1.4" fill="#35c247"/><rect x="4.6" y="16" width="10" height="4.2" fill="#2fc444"/></svg>
<svg style="left:79px;top:692.5px" width="21" height="21" viewBox="0 0 21 21"><rect x="5.8" y="2" width="14" height="8.9" fill="url(#gScr)" stroke="#2479c4" stroke-width="1.1"/><rect x="2.2" y="5.7" width="14" height="9" fill="url(#gScr)" stroke="#2479c4" stroke-width="1.1"/><rect x="0.6" y="17" width="18.6" height="3.2" fill="#dcdcdc"/><rect x="8" y="14.8" width="3" height="1.4" fill="#35c247"/><rect x="4.6" y="16" width="10" height="4.2" fill="#2fc444"/></svg>
<svg style="left:79px;top:715.0px" width="21" height="21" viewBox="0 0 21 21"><rect x="5.8" y="2" width="14" height="8.9" fill="url(#gScr)" stroke="#2479c4" stroke-width="1.1"/><rect x="2.2" y="5.7" width="14" height="9" fill="url(#gScr)" stroke="#2479c4" stroke-width="1.1"/><rect x="0.6" y="17" width="18.6" height="3.2" fill="#dcdcdc"/><rect x="8" y="14.8" width="3" height="1.4" fill="#35c247"/><rect x="4.6" y="16" width="10" height="4.2" fill="#2fc444"/></svg>
<svg style="left:79px;top:737.5px" width="21" height="21" viewBox="0 0 21 21"><rect x="5.8" y="2" width="14" height="8.9" fill="url(#gScr)" stroke="#2479c4" stroke-width="1.1"/><rect x="2.2" y="5.7" width="14" height="9" fill="url(#gScr)" stroke="#2479c4" stroke-width="1.1"/><rect x="0.6" y="17" width="18.6" height="3.2" fill="#dcdcdc"/><rect x="8" y="14.8" width="3" height="1.4" fill="#35c247"/><rect x="4.6" y="16" width="10" height="4.2" fill="#2fc444"/></svg>
<svg style="left:79px;top:760.0px" width="21" height="21" viewBox="0 0 21 21"><rect x="5.8" y="2" width="14" height="8.9" fill="url(#gScr)" stroke="#2479c4" stroke-width="1.1"/><rect x="2.2" y="5.7" width="14" height="9" fill="url(#gScr)" stroke="#2479c4" stroke-width="1.1"/><rect x="0.6" y="17" width="18.6" height="3.2" fill="#dcdcdc"/><rect x="8" y="14.8" width="3" height="1.4" fill="#35c247"/><rect x="4.6" y="16" width="10" height="4.2" fill="#2fc444"/></svg>
<svg style="left:79px;top:782.5px" width="21" height="21" viewBox="0 0 21 21"><rect x="5.8" y="2" width="14" height="8.9" fill="url(#gScr)" stroke="#2479c4" stroke-width="1.1"/><rect x="2.2" y="5.7" width="14" height="9" fill="url(#gScr)" stroke="#2479c4" stroke-width="1.1"/><rect x="0.6" y="17" width="18.6" height="3.2" fill="#dcdcdc"/><rect x="8" y="14.8" width="3" height="1.4" fill="#35c247"/><rect x="4.6" y="16" width="10" height="4.2" fill="#2fc444"/></svg>
<svg style="left:79px;top:805.0px" width="21" height="21" viewBox="0 0 21 21"><rect x="5.8" y="2" width="14" height="8.9" fill="url(#gScr)" stroke="#2479c4" stroke-width="1.1"/><rect x="2.2" y="5.7" width="14" height="9" fill="url(#gScr)" stroke="#2479c4" stroke-width="1.1"/><rect x="0.6" y="17" width="18.6" height="3.2" fill="#dcdcdc"/><rect x="8" y="14.8" width="3" height="1.4" fill="#35c247"/><rect x="4.6" y="16" width="10" height="4.2" fill="#2fc444"/></svg>
<div style="left:3.8px;top:807.6px;width:796px;height:31px;background:#f0f0f0"></div>
<div style="left:0px;top:807.6px;width:3.8px;height:31px;background:#f0f0f0"></div>
<div style="left:523.5px;top:810px;width:1px;height:28px;background:#dcdcdc"></div><div style="left:524.5px;top:810px;width:1px;height:28px;background:#fbfbfb"></div>
<div style="left:690.5px;top:810px;width:1px;height:28px;background:#dcdcdc"></div><div style="left:691.5px;top:810px;width:1px;height:28px;background:#fbfbfb"></div>
<svg width="0" height="0" style="left:0;top:0"><defs>
<linearGradient id="gScr" x1="0" y1="0" x2="1" y2="1"><stop offset="0" stop-color="#6cc3fb"/><stop offset="0.5" stop-color="#3eaaf6"/><stop offset="1" stop-color="#2a9cf0"/></linearGradient>
<linearGradient id="gSpk" x1="0" y1="0" x2="1" y2="0"><stop offset="0" stop-color="#6f7478"/><stop offset="0.35" stop-color="#b9bcbe"/><stop offset="0.7" stop-color="#a4a7a9"/><stop offset="1" stop-color="#7b7f82"/></linearGradient>
<linearGradient id="gArr" x1="0" y1="0" x2="0" y2="1"><stop offset="0" stop-color="#b4b4b4"/><stop offset="0.5" stop-color="#8e8e8e"/><stop offset="1" stop-color="#a8a8a8"/></linearGradient>
<linearGradient id="gGrn" x1="0" y1="0" x2="1" y2="0"><stop offset="0" stop-color="#2c9a36"/><stop offset="0.45" stop-color="#63d46c"/><stop offset="1" stop-color="#1f7f2a"/></linearGradient>
<linearGradient id="gHelp" x1="0" y1="0" x2="1" y2="0"><stop offset="0" stop-color="#1d2f8e"/><stop offset="0.22" stop-color="#1d2f8e"/><stop offset="0.24" stop-color="#4a6fdc"/><stop offset="1" stop-color="#3557c8"/></linearGradient>
<linearGradient id="gWin" x1="0" y1="0" x2="1" y2="1"><stop offset="0" stop-color="#4cc2f7"/><stop offset="1" stop-color="#0b74d6"/></linearGradient>
<linearGradient id="gMse" x1="0" y1="0" x2="1" y2="0"><stop offset="0" stop-color="#7c8aa0"/><stop offset="0.5" stop-color="#a9b4c4"/><stop offset="1" stop-color="#76839a"/></linearGradient>
</defs></svg>
<svg style="left:11px;top:8px" width="21" height="21" viewBox="-0.5 -0.5 21 21"><rect x="1" y="10.3" width="16" height="10" fill="#dcdcdc" stroke="#8f8f8f" stroke-width="1"/><rect x="2" y="17.6" width="14" height="2.2" fill="#f4f4f4"/><rect x="7" y="9.3" width="9" height="1.4" fill="#777"/><rect x="8.3" y="1.5" width="6.5" height="8.5" fill="#333"/><circle cx="11.6" cy="4.8" r="1.3" fill="#2fd84a"/><rect x="3.2" y="12.4" width="2.4" height="4.2" rx="0.8" fill="#222"/><rect x="11.6" y="12.4" width="2.4" height="4.2" rx="0.8" fill="#222"/></svg>
<div style="left:647.5px;top:18.8px;width:12.5px;height:1.3px;background:#1c1c1c"></div>
<div style="left:705px;top:13px;width:12.6px;height:12.6px;border:1.3px solid #1c1c1c;border-radius:2px"></div>
<svg style="left:762px;top:11px" width="18" height="18" viewBox="0 0 18 18"><path d="M2.2 2.2 L14.8 14.6 M14.8 2.2 L2.2 14.6" stroke="#1c1c1c" stroke-width="1.3" stroke-linecap="round"/></svg>
<svg style="left:7.3px;top:74.2px" width="21" height="19" viewBox="0 0 21 19"><path d="M0.8 9.2 L9.4 0.8 L9.4 5.2 L18.6 5.2 Q20 5.2 20 6.6 L20 11.8 Q20 13.2 18.6 13.2 L9.4 13.2 L9.4 17.8 Z" fill="url(#gArr)" stroke="#7d7d7d" stroke-width="0.9" stroke-linejoin="round"/></svg>
<svg style="left:36.3px;top:74.2px" width="21" height="19" viewBox="0 0 21 19"><g transform="translate(21,0) scale(-1,1)"><path d="M0.8 9.2 L9.4 0.8 L9.4 5.2 L18.6 5.2 Q20 5.2 20 6.6 L20 11.8 Q20 13.2 18.6 13.2 L9.4 13.2 L9.4 17.8 Z" fill="url(#gArr)" stroke="#7d7d7d" stroke-width="0.9" stroke-linejoin="round"/></g></svg>
<div style="left:62.8px;top:70.5px;width:1px;height:24.5px;background:#c9c9c9"></div>
<div style="left:101.5px;top:70.5px;width:1px;height:24.5px;background:#c9c9c9"></div>
<div style="left:169.3px;top:70.5px;width:1px;height:24.5px;background:#c9c9c9"></div>
<div style="left:207.5px;top:70.5px;width:1px;height:24.5px;background:#c9c9c9"></div>
<svg style="left:75.3px;top:76.8px" width="21" height="17" viewBox="0 0 21 17"><rect x="0.5" y="0.5" width="19.4" height="15.2" fill="#fff" stroke="#8793a3" stroke-width="1"/><rect x="1" y="1" width="18.4" height="3.2" fill="#b9c1cc"/><rect x="2" y="1.8" width="11" height="1" fill="#eef1f5"/><rect x="14.6" y="1.6" width="1.6" height="1.6" fill="#7d8896"/><rect x="16.8" y="1.6" width="1.6" height="1.6" fill="#7d8896"/><rect x="1" y="4.2" width="18.4" height="1" fill="#8793a3"/><rect x="7" y="5.2" width="1" height="10.4" fill="#8793a3"/><rect x="1.2" y="5.4" width="5.6" height="10" fill="#e6eaf0"/><g fill="#3f7fd6"><rect x="3" y="7.2" width="2.2" height="1.1"/><rect x="3" y="9.8" width="2.2" height="1.1"/><rect x="3" y="12.4" width="2.2" height="1.1"/></g><path d="M9.8 10.4 L13.8 7 L13.8 13.8 Z" fill="#43b02a"/></svg>
<svg style="left:143px;top:76.8px" width="21" height="17" viewBox="0 0 21 17"><rect x="0.5" y="0.5" width="19.4" height="15.2" fill="#fff" stroke="#8793a3" stroke-width="1"/><rect x="1" y="1" width="18.4" height="3.2" fill="#b9c1cc"/><rect x="2" y="1.8" width="11" height="1" fill="#eef1f5"/><rect x="14.6" y="1.6" width="1.6" height="1.6" fill="#7d8896"/><rect x="16.8" y="1.6" width="1.6" height="1.6" fill="#7d8896"/><rect x="1" y="4.2" width="18.4" height="1" fill="#8793a3"/><rect x="12.2" y="5.2" width="1" height="10.4" fill="#8793a3"/><rect x="13.4" y="5.4" width="5.6" height="10" fill="#e6eaf0"/><g fill="#3f7fd6"><rect x="15" y="7.2" width="2.2" height="1.1"/><rect x="15" y="9.8" width="2.2" height="1.1"/><rect x="15" y="12.4" width="2.2" height="1.1"/></g><path d="M8.8 10.4 L4.8 7 L4.8 13.8 Z" fill="#43b02a"/></svg>
<svg style="left:115.3px;top:72.6px" width="17" height="21" viewBox="0 0 17 21"><rect x="0.2" y="0.3" width="16.2" height="19.8" fill="url(#gHelp)"/><rect x="0.2" y="0.3" width="16.2" height="19.8" fill="none" stroke="#1a2a80" stroke-width="0.6"/><text x="9.7" y="16.2" font-family="Liberation Sans, sans-serif" font-weight="700" font-size="17" fill="#fff" text-anchor="middle">?</text></svg>
<svg style="left:180.5px;top:72.4px" width="22" height="22" viewBox="0 0 22 22"><path d="M5 0.8 H13.4 L16.6 4 V13 H5 Z" fill="#fbfbfb" stroke="#b5b5b5" stroke-width="0.8"/><path d="M13.4 0.8 V4 H16.6" fill="#e8e8e8" stroke="#b5b5b5" stroke-width="0.7"/><g transform="translate(6.6,12.4)"><path d="M-1.1 -6.2 H1.1 L1.5 -4.5 L3 -3.8 L4.5 -4.8 L6 -3.2 L5 -1.8 L5.6 -0.3 L7.2 0 V2 L5.6 2.4 L5 3.8 L6 5.2 L4.5 6.7 L3 5.8 L1.5 6.4 L1.1 8 H-1.1 L-1.5 6.4 L-3 5.8 L-4.5 6.7 L-6 5.2 L-5 3.8 L-5.6 2.4 L-7.2 2 V0 L-5.6 -0.3 L-5 -1.8 L-6 -3.2 L-4.5 -4.8 L-3 -3.8 L-1.5 -4.5 Z" transform="translate(0,-0.9) scale(0.92)" fill="#c9c9c9" stroke="#8e8e8e" stroke-width="0.9"/><circle cx="0" cy="0" r="2.3" fill="#fff" stroke="#8e8e8e" stroke-width="0.8"/></g><path d="M15.6 8.6 L21 14 H18.2 V16 H13 V14 H10.2 Z" fill="#2dc437"/><rect x="13" y="17" width="5.2" height="1.4" fill="#2dc437"/><rect x="13" y="19.2" width="5.2" height="1.4" fill="#2dc437"/></svg>
<svg style="left:219.5px;top:73.2px" width="22" height="20" viewBox="0 0 22 20"><rect x="0.9" y="0.9" width="19.6" height="12.4" fill="#3ea6f2" stroke="#2a84d2" stroke-width="0.9"/><rect x="4" y="17.4" width="16.4" height="1.5" fill="#9fb0c2"/><path d="M10.6 11.2 L3.4 18.6" stroke="#7b8a9a" stroke-width="1.7" stroke-linecap="round"/><circle cx="13.6" cy="6.8" r="4.7" fill="#9ed4f8" stroke="#5aa8e0" stroke-width="1"/></svg>
<div class="bd" style="left:0;top:0;width:800px;height:1.6px"></div>
<div class="bd" style="left:798.8px;top:0;width:1.2px;height:840px"></div>
<div class="bd" style="left:0;top:838.3px;width:800px;height:1.7px"></div></div>
<div style="left:797.8px;top:0;width:2.2px;height:840px;background:#5f5f5f"></div><div style="left:800px;top:0;width:1.6px;height:840px;background:#7d7d7d"></div>
<div id="texts">
<span class="t" style="left:123.71px;top:24.5px;font-size:14.5px;line-height:14.5px;color:#2a2a2a;transform:scaleX(1.0588)">Settings</span>
<span class="t" style="left:33.40px;top:64.3px;font-size:34px;line-height:34px;color:#5c5c5c;transform:scaleX(1.0041);-webkit-text-stroke:1.0px #5c5c5c">System</span>
<span class="t" style="left:198.29px;top:64.3px;font-size:34px;line-height:34px;color:#5c5c5c;transform:scaleX(1.0251);-webkit-text-stroke:1.0px #5c5c5c">Display</span>
<span class="t" style="left:369.38px;top:64.3px;font-size:34px;line-height:34px;color:#1b1b1b;transform:scaleX(1.0360);-webkit-text-stroke:1.0px #1b1b1b">Advanced display</span>
<span class="t" style="left:55.70px;top:164.6px;font-size:17px;line-height:17px;color:#1b1b1b;transform:scaleX(1.0184)">Select a display to view or change its settings</span>
<span class="t" style="left:501.70px;top:163.6px;font-size:17px;line-height:17px;color:#1b1b1b;transform:scaleX(0.9924)">Display 1: Internal Display</span>
<span class="t" style="left:34.30px;top:259.5px;font-size:17px;line-height:17px;color:#1b1b1b;transform:scaleX(0.9902);font-weight:700">Display information</span>
<span class="t" style="left:108.50px;top:314.4px;font-size:17px;line-height:17px;color:#1b1b1b;transform:scaleX(1.0188)">Internal Display</span>
<span class="t" style="left:108.50px;top:337.0px;font-size:14.5px;line-height:14.5px;color:#5d5d5d;transform:scaleX(1.0215)">Display 1: Connected to Intel(R) UHD Graphics</span>
<span class="t" style="left:108.50px;top:392.1px;font-size:17px;line-height:17px;color:#1b1b1b;transform:scaleX(1.0349)">Desktop mode</span>
<span class="t" style="left:294.60px;top:392.1px;font-size:17px;line-height:17px;color:#5d5d5d;transform:scaleX(0.9560)">1920 × 1080, 60.01 Hz</span>
<span class="t" style="left:108.50px;top:423.0px;font-size:17px;line-height:17px;color:#1b1b1b;transform:scaleX(1.0268)">Active signal mode</span>
<span class="t" style="left:294.60px;top:423.0px;font-size:17px;line-height:17px;color:#5d5d5d;transform:scaleX(0.9560)">1920 × 1080, 60.01 Hz</span>
<span class="t" style="left:108.50px;top:453.8px;font-size:17px;line-height:17px;color:#1b1b1b;transform:scaleX(1.0099)">Variable refresh rate</span>
<span class="t" style="left:294.60px;top:453.8px;font-size:17px;line-height:17px;color:#5d5d5d;transform:scaleX(1.0636)">Not Supported</span>
<span class="t" style="left:108.50px;top:484.7px;font-size:17px;line-height:17px;color:#1b1b1b;transform:scaleX(1.0530)">Bit depth</span>
<span class="t" style="left:294.60px;top:484.7px;font-size:17px;line-height:17px;color:#5d5d5d;transform:scaleX(1.1121)">8-bit</span>
<span class="t" style="left:108.50px;top:515.5px;font-size:17px;line-height:17px;color:#1b1b1b;transform:scaleX(1.0460)">Color format</span>
<span class="t" style="left:294.60px;top:515.5px;font-size:17px;line-height:17px;color:#5d5d5d;transform:scaleX(0.8944)">RGB</span>
<span class="t" style="left:108.50px;top:546.4px;font-size:17px;line-height:17px;color:#1b1b1b;transform:scaleX(0.9978)">Color space</span>
<span class="t" style="left:294.60px;top:546.4px;font-size:17px;line-height:17px;color:#5d5d5d;transform:scaleX(0.9953)">Standard dynamic range (SDR)</span>
<span class="t" style="left:110.30px;top:578.6px;font-size:17px;line-height:17px;color:#0c429b;transform:scaleX(1.0184)">Display adapter properties for Display 1</span>
<span class="t" style="left:55.70px;top:638.5px;font-size:17px;line-height:17px;color:#1b1b1b;transform:scaleX(1.0003)">Choose a refresh rate</span>
<span class="t" style="left:55.70px;top:661.5px;font-size:14.5px;line-height:14.5px;color:#5d5d5d;transform:scaleX(1.0618)">A higher rate gives smoother motion, but also uses more power</span>
<span class="t" style="left:55.70px;top:680.7px;font-size:14.5px;line-height:14.5px;color:#0c429b;transform:scaleX(1.0285);font-weight:700">More about refresh rate</span>
<span class="t" style="left:561.50px;top:657.8px;font-size:17px;line-height:17px;color:#1b1b1b;transform:scaleX(0.9517)">60.01 Hz</span>
<span class="t" style="left:108.50px;top:732.6px;font-size:17px;line-height:17px;color:#1b1b1b;transform:scaleX(1.0127)">Dynamic refresh rate</span>
<span class="t" style="left:108.50px;top:756.0px;font-size:14.5px;line-height:14.5px;color:#5d5d5d;transform:scaleX(1.0516)">To help save power, Windows adjusts the refresh rate up to the selected</span>
<span class="t" style="left:108.50px;top:775.2px;font-size:14.5px;line-height:14.5px;color:#5d5d5d;transform:scaleX(1.0554)">rate above</span>
<span class="t" style="left:130.00px;top:797.3px;font-size:14.5px;line-height:14.5px;color:#1b1b1b;transform:scaleX(1.0618)">Dynamic refresh rate isn&#x27;t supported</span>
<span class="t" style="left:138.10px;top:819.2px;font-size:14.5px;line-height:14.5px;color:#0c429b;transform:scaleX(1.0656)">More about dynamic refresh rate</span>
<span class="t" style="left:619.70px;top:775.6px;font-size:17px;line-height:17px;color:#9b9b9b;transform:scaleX(1.0713)">Off</span>
<span class="t" style="left:837.93px;top:12.7px;font-size:14.5px;line-height:14.5px;color:#1a1a1a;transform:scaleX(1.0144)">Device Manager</span>
<span class="t" style="left:813.72px;top:46.7px;font-size:14.5px;line-height:14.5px;color:#1a1a1a;transform:scaleX(1.0233)">File</span>
<span class="t" style="left:857.00px;top:46.7px;font-size:14.5px;line-height:14.5px;color:#1a1a1a;transform:scaleX(1.0253)">Action</span>
<span class="t" style="left:918.00px;top:46.7px;font-size:14.5px;line-height:14.5px;color:#1a1a1a;transform:scaleX(0.9696)">View</span>
<span class="t" style="left:967.31px;top:46.7px;font-size:14.5px;line-height:14.5px;color:#1a1a1a;transform:scaleX(1.0321)">Help</span>
<span class="t" style="left:857.50px;top:112.1px;font-size:14.5px;line-height:14.5px;color:#1a1a1a;transform:scaleX(0.8954)">DESKTOP-KKP5A70</span>
<span class="t" style="left:881.70px;top:134.6px;font-size:14.5px;line-height:14.5px;color:#1a1a1a;transform:scaleX(1.0509)">Audio inputs and outputs</span>
<span class="t" style="left:881.70px;top:157.1px;font-size:14.5px;line-height:14.5px;color:#1a1a1a;transform:scaleX(0.9633)">Audio Processing Objects (APOs)</span>
<span class="t" style="left:881.70px;top:179.6px;font-size:14.5px;line-height:14.5px;color:#1a1a1a;transform:scaleX(0.9833)">Batteries</span>
<span class="t" style="left:881.70px;top:202.1px;font-size:14.5px;line-height:14.5px;color:#1a1a1a;transform:scaleX(1.0722)">Bluetooth</span>
<span class="t" style="left:905.40px;top:224.6px;font-size:14.5px;line-height:14.5px;color:#1a1a1a;transform:scaleX(0.9886)">Bluetooth Device (RFCOMM Protocol TDI)</span>
<span class="t" style="left:905.40px;top:247.1px;font-size:14.5px;line-height:14.5px;color:#1a1a1a;transform:scaleX(0.9784)">Intel(R) Wireless Bluetooth(R)</span>
<span class="t" style="left:905.40px;top:269.6px;font-size:14.5px;line-height:14.5px;color:#1a1a1a;transform:scaleX(1.0375)">Microsoft Bluetooth Enumerator</span>
<span class="t" style="left:905.40px;top:292.1px;font-size:14.5px;line-height:14.5px;color:#1a1a1a;transform:scaleX(1.0151)">Microsoft Bluetooth LE Enumerator</span>
<span class="t" style="left:881.70px;top:314.6px;font-size:14.5px;line-height:14.5px;color:#1a1a1a;transform:scaleX(0.9373)">Cameras</span>
<span class="t" style="left:881.70px;top:337.1px;font-size:14.5px;line-height:14.5px;color:#1a1a1a;transform:scaleX(1.0173)">Computer</span>
<span class="t" style="left:881.70px;top:359.6px;font-size:14.5px;line-height:14.5px;color:#1a1a1a;transform:scaleX(0.9907)">Disk drives</span>
<span class="t" style="left:905.40px;top:382.1px;font-size:14.5px;line-height:14.5px;color:#1a1a1a;transform:scaleX(0.9460)">PC711 NVMe SK hynix 1TB</span>
<span class="t" style="left:881.70px;top:404.6px;font-size:14.5px;line-height:14.5px;color:#1a1a1a;transform:scaleX(0.9963)">Display adapters</span>
<span class="t" style="left:905.40px;top:427.1px;font-size:14.5px;line-height:14.5px;color:#1a1a1a;transform:scaleX(0.9578)">Intel(R) UHD Graphics</span>
<span class="t" style="left:881.70px;top:449.6px;font-size:14.5px;line-height:14.5px;color:#1a1a1a;transform:scaleX(0.9841)">Firmware</span>
<span class="t" style="left:881.70px;top:472.1px;font-size:14.5px;line-height:14.5px;color:#1a1a1a;transform:scaleX(0.9837)">Human Interface Devices</span>
<span class="t" style="left:881.70px;top:494.6px;font-size:14.5px;line-height:14.5px;color:#1a1a1a;transform:scaleX(0.9935)">Keyboards</span>
<span class="t" style="left:881.70px;top:517.1px;font-size:14.5px;line-height:14.5px;color:#1a1a1a;transform:scaleX(1.0226)">Memory technology devices</span>
<span class="t" style="left:881.70px;top:539.6px;font-size:14.5px;line-height:14.5px;color:#1a1a1a;transform:scaleX(1.0300)">Mice and other pointing devices</span>
<span class="t" style="left:881.70px;top:562.1px;font-size:14.5px;line-height:14.5px;color:#1a1a1a;transform:scaleX(1.0836)">Monitors</span>
<span class="t" style="left:881.70px;top:584.6px;font-size:14.5px;line-height:14.5px;color:#1a1a1a;transform:scaleX(1.0142)">Network adapters</span>
<span class="t" style="left:905.40px;top:607.1px;font-size:14.5px;line-height:14.5px;color:#1a1a1a;transform:scaleX(0.9932)">Bluetooth Device (Personal Area Network)</span>
<span class="t" style="left:905.40px;top:629.6px;font-size:14.5px;line-height:14.5px;color:#1a1a1a;transform:scaleX(0.9697)">Intel(R) Wi-Fi 6 AX201 160MHz</span>
<span class="t" style="left:905.40px;top:652.1px;font-size:14.5px;line-height:14.5px;color:#1a1a1a;transform:scaleX(1.0096)">WAN Miniport (IKEv2)</span>
<span class="t" style="left:905.40px;top:674.6px;font-size:14.5px;line-height:14.5px;color:#1a1a1a;transform:scaleX(1.0230)">WAN Miniport (IP)</span>
<span class="t" style="left:905.40px;top:697.1px;font-size:14.5px;line-height:14.5px;color:#1a1a1a;transform:scaleX(1.0164)">WAN Miniport (IPv6)</span>
<span class="t" style="left:905.40px;top:719.6px;font-size:14.5px;line-height:14.5px;color:#1a1a1a;transform:scaleX(0.9916)">WAN Miniport (L2TP)</span>
<span class="t" style="left:905.40px;top:742.1px;font-size:14.5px;line-height:14.5px;color:#1a1a1a;transform:scaleX(1.0562)">WAN Miniport (Network Monitor)</span>
<span class="t" style="left:905.40px;top:764.6px;font-size:14.5px;line-height:14.5px;color:#1a1a1a;transform:scaleX(0.9743)">WAN Miniport (PPPOE)</span>
<span class="t" style="left:905.40px;top:787.1px;font-size:14.5px;line-height:14.5px;color:#1a1a1a;transform:scaleX(0.9792)">WAN Miniport (PPTP)</span>
<span class="t" style="left:63.03px;top:852.5px;font-size:14.5px;line-height:14.5px;color:#2a2a2a;transform:scaleX(1.0260)">S&amp;P 500</span>
<span class="t" style="left:63.24px;top:872.3px;font-size:14.5px;line-height:14.5px;color:#1f8a1f;transform:scaleX(1.0155)">+0.47%</span>
<span class="t" style="left:544.27px;top:861.9px;font-size:17px;line-height:17px;color:#5a5a5a;transform:scaleX(0.9712)">Search</span>
<span class="t" style="left:1512.75px;top:852.3px;font-size:14.5px;line-height:14.5px;color:#1a1a1a;transform:scaleX(1.0542)">10:44 AM</span>
<span class="t" style="left:1514.90px;top:872.4px;font-size:14.5px;line-height:14.5px;color:#1a1a1a;transform:scaleX(1.0959)">1/6/2026</span>
</div>
</body></html>
